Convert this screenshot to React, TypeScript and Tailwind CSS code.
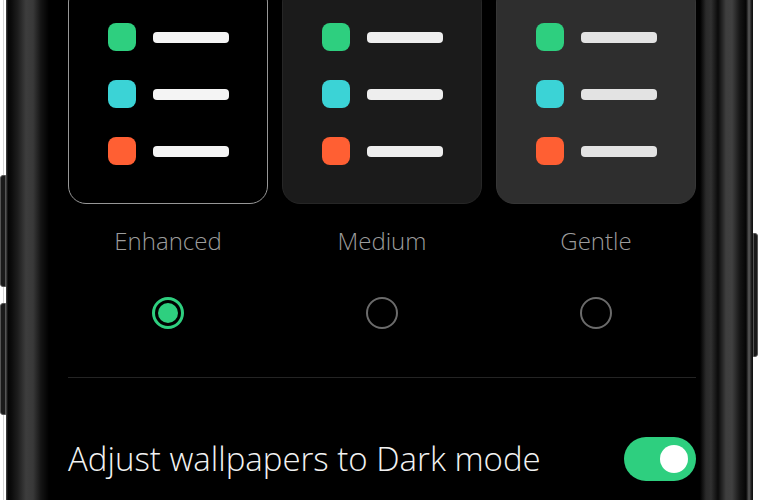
import React from 'react';

const swatches = ['bg-[#2ecf7f]', 'bg-[#3bd3d6]', 'bg-[#ff5f33]'];

const modes = [
  {
    id: 'enhanced',
    label: 'Enhanced',
    card: 'bg-black border-[1.5px] border-[#979797]',
    line: 'bg-[#f4f4f4]',
    selected: true,
  },
  {
    id: 'medium',
    label: 'Medium',
    card: 'bg-[#1b1b1b] border border-[#262626]',
    line: 'bg-[#eeeeee]',
    selected: false,
  },
  {
    id: 'gentle',
    label: 'Gentle',
    card: 'bg-[#2e2e2e] border border-[#363636]',
    line: 'bg-[#e3e3e3]',
    selected: false,
  },
];

const Preview = ({ card, line }: { card: string; line: string }) => (
  <div className={`w-[200px] h-[220px] rounded-[18px] flex flex-col items-center justify-center gap-[29px] ${card}`}>
    {swatches.map((s) => (
      <div key={s} className="flex items-center gap-[17px]">
        <div className={`w-[28px] h-[28px] rounded-[8px] ${s}`} />
        <div className={`w-[76px] h-[11px] rounded-[4px] ${line}`} />
      </div>
    ))}
  </div>
);

const Radio = ({ on }: { on: boolean }) =>
  on ? (
    <div className="w-[32px] h-[32px] rounded-full border-[3px] border-[#2ecf7f] flex items-center justify-center">
      <div className="w-[20px] h-[20px] rounded-full bg-[#2ecf7f]" />
    </div>
  ) : (
    <div className="w-[32px] h-[32px] rounded-full border-2 border-[#6b6b6b]" />
  );

export default function App() {
  return (
    <div
      className="w-[759px] h-[500px] overflow-hidden bg-white flex"
      style={{ fontFamily: '"Open Sans", Lato, sans-serif' }}
    >
      {/* left side keys */}
      <div className="relative w-[6px] shrink-0">
        <div className="absolute left-[3px] top-0 bottom-0 w-px bg-[#d4d4d4]" />
        <div className="absolute left-0 top-[175px] w-[6px] h-[112px] rounded-l-[3px] bg-[#1a1a1a] border border-[#555]" />
        <div className="absolute left-0 top-[303px] w-[6px] h-[112px] rounded-l-[3px] bg-[#1a1a1a] border border-[#555]" />
      </div>

      {/* phone body */}
      <div className="flex flex-1">
        <div className="w-[44px] shrink-0 bg-[linear-gradient(to_right,#4a4a4a_0px,#050505_2px,#0a0a0a_5px,#1e1e1e_12px,#3d3d3d_20px,#393939_27px,#141414_35px,#000_43px)]" />

        <div className="flex-1 bg-black pl-[18px] pr-[4px]">
          <div className="-mt-[16px] grid grid-cols-3 gap-x-[14px]">
            {modes.map((m) => (
              <div key={m.id} className="flex flex-col items-center">
                <Preview card={m.card} line={m.line} />
                <div className="mt-[22px] h-[30px] leading-[30px] text-[24px] font-light text-[#9c9c9c]">{m.label}</div>
                <div className="mt-[41px]">
                  <Radio on={m.selected} />
                </div>
              </div>
            ))}
          </div>

          <div className="mt-[48px] h-px bg-[#242424]" />

          <div className="mt-[59px] flex items-center justify-between">
            <span className="text-[33px] leading-[44px] font-light text-[#f2f2f2]">Adjust wallpapers to Dark mode</span>
            <div className="w-[72px] h-[44px] rounded-full bg-[#2ecf7f] flex items-center justify-end pr-[8px]">
              <div className="w-[28px] h-[28px] rounded-full bg-white" />
            </div>
          </div>
        </div>

        <div className="w-[53px] shrink-0 bg-[linear-gradient(to_right,#000_0px,#2a2a2a_6px,#303030_11px,#0a0a0a_18px,#3e3e3e_26px,#404040_32px,#151515_40px,#050505_46px,#5a5a5a_49px,#111_52px)]" />
      </div>

      {/* right side key */}
      <div className="relative w-[6px] shrink-0">
        <div className="absolute right-[1px] top-[233px] w-[5px] h-[124px] rounded-r-[3px] bg-[#1a1a1a] border border-[#555]" />
      </div>
    </div>
  );
}
